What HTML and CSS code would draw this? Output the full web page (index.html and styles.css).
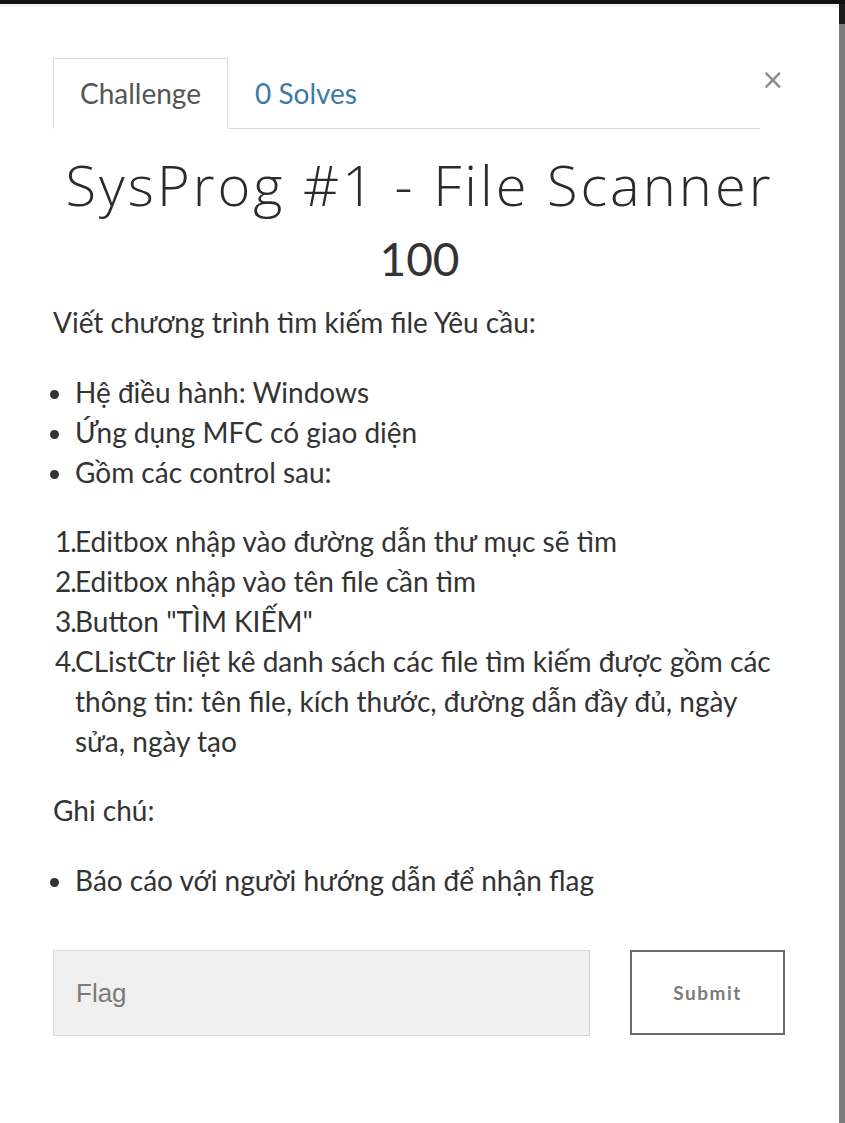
FILE: index.html
```html
<!DOCTYPE html>
<html lang="en">
<head>
    <meta charset="UTF-8">
    <title>SysProg #1 - File Scanner</title>
    <link rel="stylesheet" href="styles.css">
</head>
<body>
    <div class="topbar"></div>
    <div class="page">
        <div class="modal">
            <!-- Tabs + close -->
            <div class="modal-header">
                <ul class="tabs">
                    <li class="tab active">Challenge</li>
                    <li class="tab link">0 Solves</li>
                </ul>
                <span class="close">&times;</span>
            </div>

            <h2 class="challenge-name">SysProg #1 - File Scanner</h2>
            <h3 class="challenge-value">100</h3>

            <div class="description">
                <p>Viết chương trình tìm kiếm file Yêu cầu:</p>
                <ul>
                    <li>Hệ điều hành: Windows</li>
                    <li>Ứng dụng MFC có giao diện</li>
                    <li>Gồm các control sau:</li>
                </ul>
                <ol>
                    <li>Editbox nhập vào đường dẫn thư mục sẽ tìm</li>
                    <li>Editbox nhập vào tên file cần tìm</li>
                    <li>Button "TÌM KIẾM"</li>
                    <li>CListCtr liệt kê danh sách các file tìm kiếm được gồm các thông tin: tên file, kích thước, đường dẫn đầy đủ, ngày sửa, ngày tạo</li>
                </ol>
                <p>Ghi chú:</p>
                <ul>
                    <li>Báo cáo với người hướng dẫn để nhận flag</li>
                </ul>
            </div>

            <form class="submit-row">
                <input class="flag-input" type="text" placeholder="Flag">
                <button class="submit-btn" type="button">Submit</button>
            </form>
        </div>
        <div class="scrollbar"><div class="scroll-top"></div></div>
    </div>
</body>
</html>
```

FILE: styles.css
```css
/* Base */
body {
    margin: 0;
    background-color: #fff;
    font-family: 'Lato', sans-serif;
    color: #333;
}

.topbar {
    height: 4px;
    background-color: #111;
}

.page {
    display: flex;
    height: 1119px;
}

.modal {
    flex: 1;
    padding: 51px 53px 0 53px;
    border-top: 3px solid #f4f4f4;
}

.scrollbar {
    width: 6px;
    background-color: #7b7b7b;
}

.scroll-top {
    height: 20px;
    background-color: #1c1c1c;
}

/* Tabs */
.modal-header {
    display: flex;
    align-items: flex-start;
}

.tabs {
    list-style: none;
    margin: 0;
    padding: 0;
    display: flex;
    width: 707px;
    border-bottom: 1px solid #dcdcdc;
}

.tab {
    padding: 17px 26px 0 26px;
    height: 52px;
    font-size: 28px;
    color: #555;
    border: 1px solid transparent;
    margin-bottom: -1px;
}

.tab.active {
    border-color: #dcdcdc;
    border-bottom-color: #fff;
    background-color: #fff;
}

.tab.link {
    color: #3d7aa6;
}

.close {
    margin-left: 1px;
    margin-top: 8px;
    font-family: 'DejaVu Sans', sans-serif;
    font-size: 28px;
    color: #8a8a8a;
    line-height: 1;
}

/* Title */
.challenge-name {
    margin: 20px 0 0 0;
    text-align: center;
    font-family: 'Open Sans', sans-serif;
    font-weight: 300;
    font-size: 56px;
    letter-spacing: 3px;
    line-height: 70px;
    color: #2b2b2b;
}

.challenge-value {
    margin: 8px 0 0 0;
    text-align: center;
    font-weight: 400;
    font-size: 46px;
    line-height: 64px;
    color: #333;
}

/* Description */
.description {
    font-size: 28px;
    line-height: 40px;
    margin-top: 11px;
}

.description p {
    margin: 0 0 30px 0;
}

.description ul,
.description ol {
    margin: 0 0 29px 0;
    padding-left: 22px;
}

.description ol {
    list-style: none;
    counter-reset: step;
}

.description ol li {
    counter-increment: step;
}

.description ol li::before {
    content: counter(step) ".";
    display: inline-block;
    width: 20px;
    margin-left: -20px;
    letter-spacing: -1px;
}

/* Submit row */
.submit-row {
    display: flex;
    gap: 40px;
    margin-top: 50px;
}

.flag-input {
    width: 537px;
    height: 86px;
    box-sizing: border-box;
    background-color: #f0f0f0;
    border: 1px solid #d8d8d8;
    padding: 0 22px;
    font-family: 'Liberation Sans', sans-serif;
    font-size: 26px;
}

.flag-input::placeholder {
    color: #7a7a7a;
}

.submit-btn {
    width: 155px;
    height: 85px;
    background-color: #fff;
    border: 2px solid #6a6a6a;
    font-family: 'Lato', sans-serif;
    font-weight: 700;
    font-size: 19px;
    letter-spacing: 1.5px;
    color: #7b7b7b;
}
```
